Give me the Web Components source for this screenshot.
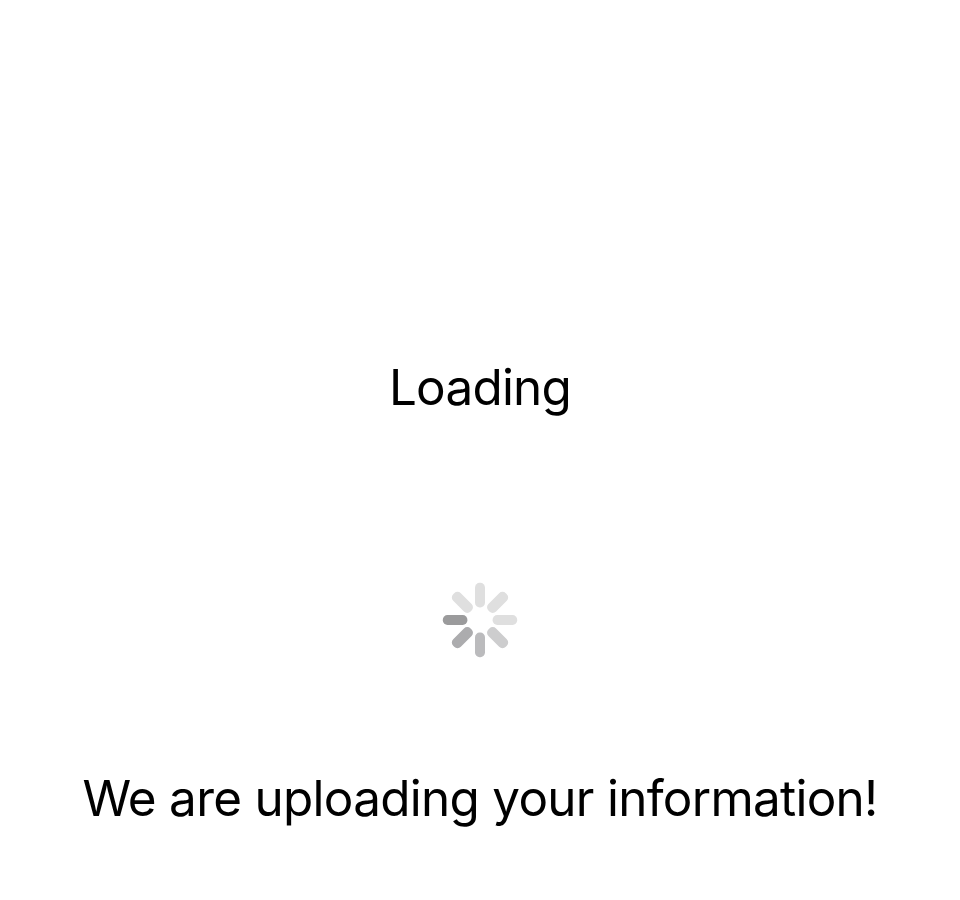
<!DOCTYPE html>
<html lang="en"><head><meta charset="utf-8"><title>Loading</title>
<style>body{margin:0;background:#fff}</style></head><body>
<loading-screen><status-text slot="title" style="--size:49.4px;--track:-0.75px">Loading</status-text><activity-spinner></activity-spinner><status-text slot="message" style="--size:49.4px;--track:-0.7px">We are uploading your information!</status-text></loading-screen>
<script>
customElements.define('status-text', class extends HTMLElement{
  constructor(){super();this.attachShadow({mode:'open'}).innerHTML=`<style>:host{display:block;font:400 var(--size)/60px Inter,sans-serif;font-variation-settings:"opsz" 24;color:#000;white-space:nowrap;letter-spacing:var(--track,0)}</style><slot></slot>`;}
});
customElements.define('activity-spinner', class extends HTMLElement{
  constructor(){super();
    const colors=['#dfdfdf','#dfdfdf','#dfdfdf','#cdcdce','#bbbbbd','#acacae','#9b9b9c','#dfdfdf'];
    this.attachShadow({mode:'open'}).innerHTML=`<style>:host{display:block;width:76px;height:76px}svg{display:block}</style><svg width="76" height="76" viewBox="-38 -38 76 76">${colors.map((c,i)=>{const w=i%2?10.8:10;return `<rect x="${-w/2}" y="-37.2" width="${w}" height="24.6" rx="4.7" fill="${c}" transform="rotate(${i*45})"/>`}).join('')}</svg>`;}
});
customElements.define('loading-screen', class extends HTMLElement{
  constructor(){super();this.attachShadow({mode:'open'}).innerHTML=`<style>:host{display:flex;flex-direction:column;align-items:center;box-sizing:border-box;height:900px;padding-top:357px;overflow:hidden}.spin{margin:165px 0 110px}</style><slot name="title"></slot><div class="spin"><slot></slot></div><slot name="message"></slot>`;}
});
</script></body></html>
